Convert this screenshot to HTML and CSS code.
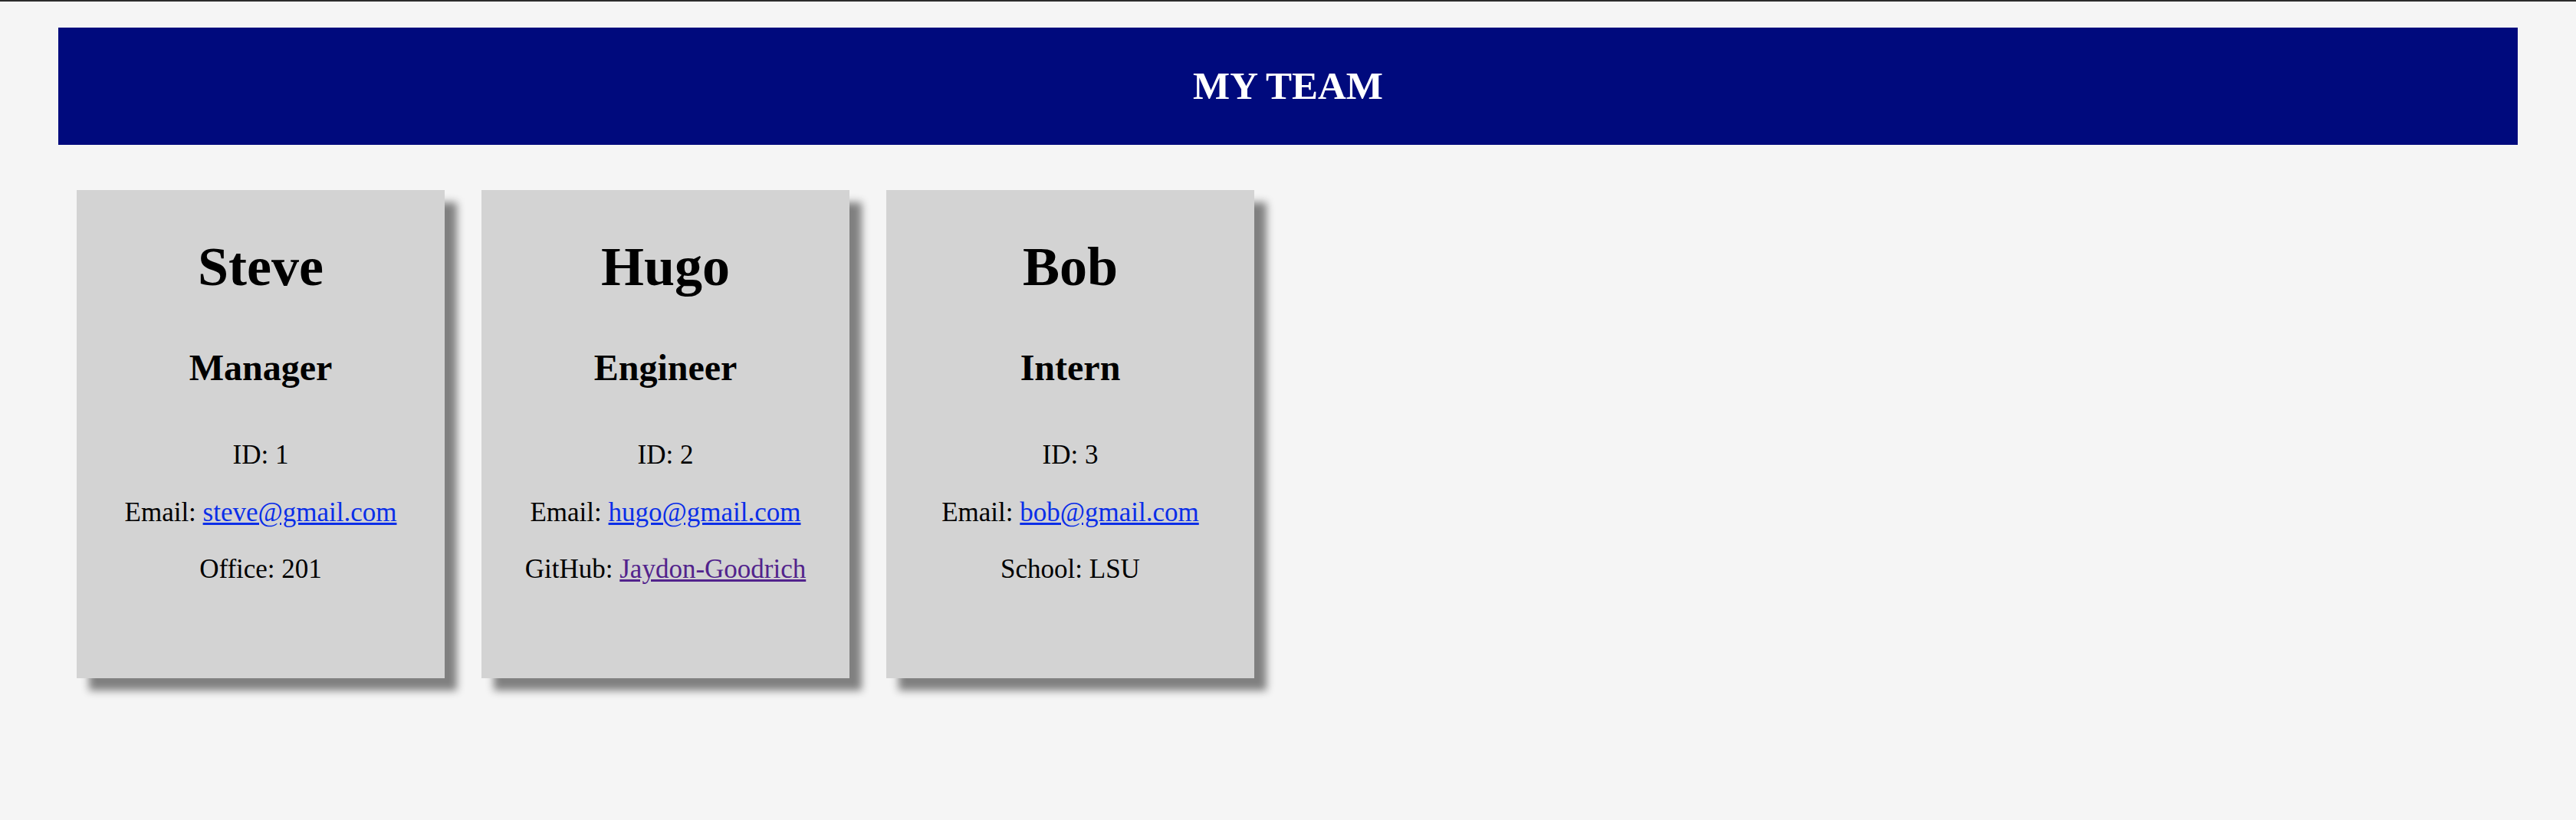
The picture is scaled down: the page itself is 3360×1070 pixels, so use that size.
FILE: index.html
```html
<!DOCTYPE html>
<html lang="en">
<head>
<meta charset="utf-8">
<title>My Team</title>
<link rel="stylesheet" href="styles.css">
</head>
<body>
<div class="page">
  <header class="banner">
    <h1 class="banner-title">MY TEAM</h1>
  </header>
  <main class="team">
    <section class="card">
      <h2 class="name">Steve</h2>
      <h3 class="role">Manager</h3>
      <p class="info">ID: 1</p>
      <p class="info">Email: <a class="link" href="mailto:steve@gmail.com">steve@gmail.com</a></p>
      <p class="info">Office: 201</p>
    </section>
    <section class="card">
      <h2 class="name">Hugo</h2>
      <h3 class="role">Engineer</h3>
      <p class="info">ID: 2</p>
      <p class="info">Email: <a class="link" href="mailto:hugo@gmail.com">hugo@gmail.com</a></p>
      <p class="info">GitHub: <a class="link visited" href="#">Jaydon-Goodrich</a></p>
    </section>
    <section class="card">
      <h2 class="name">Bob</h2>
      <h3 class="role">Intern</h3>
      <p class="info">ID: 3</p>
      <p class="info">Email: <a class="link" href="mailto:bob@gmail.com">bob@gmail.com</a></p>
      <p class="info">School: LSU</p>
    </section>
  </main>
</div>
</body>
</html>
```
FILE: styles.css
```css
html, body {
  margin: 0;
  padding: 0;
}
body {
  background: #f5f5f5;
  font-family: "Liberation Serif", "Times New Roman", serif;
  color: #000;
  border-top: 2px solid #2b2b2b;
  min-height: 1068px;
}
.page {
  padding: 34px 76px 0;
}
.banner {
  background: #000a7d;
  padding: 47px 0;
  text-align: center;
}
.banner-title {
  margin: 0;
  color: #fff;
  font-size: 51px;
  line-height: 59px;
  font-weight: 700;
}
.team {
  display: flex;
  gap: 48px;
  padding-left: 24px;
  margin-top: 59px;
}
.card {
  width: 480px;
  background: #d3d3d3;
  box-shadow: 16px 16px 10px #808080;
  text-align: center;
  padding: 59px 0 121px;
}
.name {
  margin: 0 0 62px;
  font-size: 72px;
  line-height: 1.15;
  font-weight: 700;
}
.role {
  margin: 0 0 67px;
  font-size: 48px;
  line-height: 1.15;
  font-weight: 700;
}
.info {
  margin: 0 0 34.5px;
  font-size: 35px;
  line-height: 1.15;
}
.info:last-child {
  margin-bottom: 0;
}
.link {
  color: #0a2ee8;
  text-decoration: underline;
}
.link.visited {
  color: #52238c;
}
```
